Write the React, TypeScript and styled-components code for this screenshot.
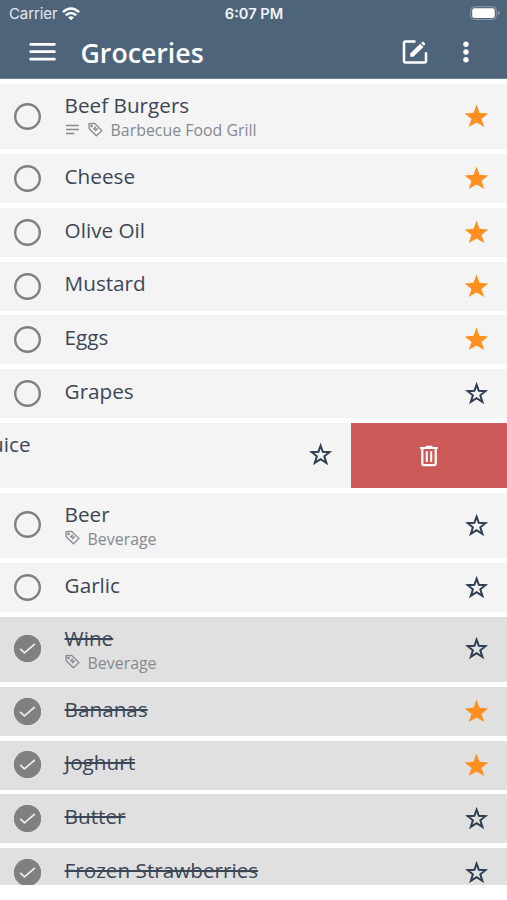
import React from "react";
import styled, { createGlobalStyle } from "styled-components";

const Global = createGlobalStyle`
  * { box-sizing: border-box; }
  body { margin: 0; background: #fff; font-family: "Open Sans", sans-serif; }
  svg { display: block; flex: none; }
`;

const Screen = styled.main`
  width: 507px;
  height: 900px;
  overflow: hidden;
  display: flex;
  flex-direction: column;
  background: #fff;
`;

const Header = styled.header`
  height: 79.4px;
  flex: none;
  background: #4d647b;
  border-bottom: 1px solid #64829a;
  color: #fff;
`;

const StatusBar = styled.div`
  height: 27px;
  padding: 0 7px 0 9px;
  display: grid;
  grid-template-columns: 1fr auto 1fr;
  align-items: center;
  font-family: Inter, sans-serif;
  font-size: 15px;
`;

const Carrier = styled.div`
  display: flex;
  align-items: center;
  gap: 5px;
  letter-spacing: -0.1px;
  color: #e6ebf0;
`;

const Clock = styled.time`
  font-weight: 600;
  font-size: 14.6px;
  margin-right: 1px;
  color: #f1f4f7;
`;

const Battery = styled.div`
  display: flex;
  justify-content: flex-end;
`;

const Toolbar = styled.div`
  height: 50.6px;
  padding: 0 38px 0 28px;
  display: flex;
  align-items: center;
`;

const Title = styled.h1`
  margin: 0 auto 0 24.5px;
  padding-top: 1px;
  font-size: 26.7px;
  line-height: 36px;
  font-weight: 600;
`;

const IconButton = styled.button<{ $gap?: number }>`
  margin: 0 0 0 ${(p) => p.$gap ?? 0}px;
  padding: 0;
  border: 0;
  background: none;
  color: inherit;
`;

const List = styled.ul`
  list-style: none;
  margin: 0;
  padding: 4.8px 0 0;
  height: 805.8px;
  flex: none;
  overflow: hidden;
  display: flex;
  flex-direction: column;
  gap: 4.8px;
`;

const Row = styled.li<{ $tall?: boolean; $done?: boolean }>`
  flex: none;
  height: ${(p) => (p.$tall ? 65.3 : 48.95)}px;
  padding: 0 18.5px 0 14px;
  display: flex;
  align-items: center;
  background: ${(p) => (p.$done ? "#e0e0e0" : "#f4f4f4")};
`;

const SwipedRow = styled(Row)`
  padding: 0;
  justify-content: flex-end;
`;

const SwipedContent = styled.div`
  width: 507px;
  height: 100%;
  flex: none;
  padding: 0 18.5px 0 14px;
  display: flex;
  align-items: center;
`;

const DeleteAction = styled.button`
  width: 156px;
  height: 100%;
  flex: none;
  display: flex;
  align-items: center;
  justify-content: center;
  padding: 0;
  border: 0;
  background: #cb5a58;
`;

const Check = styled.span<{ $done?: boolean; $tall?: boolean }>`
  width: 27px;
  height: 27px;
  margin-bottom: ${(p) => (p.$tall ? 1.6 : 0.4)}px;
  flex: none;
  border-radius: 50%;
  box-shadow: inset 0 0 0 2.4px #808080;
  background: ${(p) => (p.$done ? "#808080" : "transparent")};
  display: flex;
  align-items: center;
  justify-content: center;
`;

const Body = styled.div<{ $tall?: boolean }>`
  flex: 1;
  align-self: flex-start;
  margin-left: 23.6px;
  padding-top: ${(p) => (p.$tall ? 6.9 : 7.6)}px;
  white-space: nowrap;
`;

const Name = styled.div<{ $done?: boolean }>`
  font-size: 20.7px;
  line-height: 28px;
  color: #3b4756;
  text-decoration: ${(p) => (p.$done ? "line-through 2px" : "none")};
`;

const Meta = styled.div`
  display: flex;
  align-items: center;
  gap: 8px;
  font-size: 15.9px;
  line-height: 22px;
  color: #858990;

  svg {
    margin-bottom: 2px;
  }
`;

const StarBox = styled.span<{ $tall?: boolean }>`
  flex: none;
  margin-bottom: ${(p) => (p.$tall ? 2.4 : 1.2)}px;
`;

const Star = ({ filled, tall }: { filled?: boolean; tall?: boolean }) => (
  <StarBox $tall={tall}>
    <svg width="24" height="24" viewBox="0 0 24 24">
      {filled ? (
        <path d="M11.5 .6 14.5 8.8 23.2 9.6 16.5 15 19.3 23 11.5 18.4 3.7 23 6.5 15 -.2 9.6 8.5 8.8Z" fill="#ff9020" />
      ) : (
        <path
          d="M11.6 3.7 13.8 9.8 20.5 10.2 15.3 14.3 17.4 20.8 11.6 17.1 5.8 20.8 7.9 14.3 2.7 10.2 9.4 9.8Z"
          fill="none"
          stroke="#2f3e50"
          strokeWidth="2"
        />
      )}
    </svg>
  </StarBox>
);

const TagIcon = () => (
  <svg width="15" height="15" viewBox="0 0 15 15" fill="none" stroke="#858990" strokeWidth="1.3" strokeLinejoin="round">
    <path d="M1 1.7 1.2 6.8 8.4 13.8 13.9 8.6 6.7 1.4Z" />
    <circle cx="3.6" cy="4" r=".7" />
    <path d="m5.3 7.3 2.5-2.5M7.1 9.1l2.7-2.6M5.7 6.8l3.6.4" />
  </svg>
);

const NotesIcon = () => (
  <svg width="15" height="13" viewBox="0 0 15 13" stroke="#858990" strokeWidth="1.5">
    <path d="M1 2.5h12.8M1 6.5h12.8M1 10.5h8.3" />
  </svg>
);

const TickIcon = () => (
  <svg width="17" height="13" viewBox="0 0 17 13" fill="none" stroke="#ececec" strokeWidth="1.7">
    <path d="m1.2 6.8 4.2 4L15.8 2" />
  </svg>
);

const MenuIcon = () => (
  <svg width="28" height="20" viewBox="0 0 28 20" stroke="#fff" strokeWidth="2.8" strokeLinecap="round">
    <path d="M2.7 2.3h23.7M2.7 9.7h23.7M2.7 17.2h23.7" />
  </svg>
);

const EditIcon = () => (
  <svg width="26" height="26" viewBox="0 0 26 26" fill="none" stroke="#fff" strokeWidth="2.5" strokeLinejoin="round">
    <path d="M13.5 2.5H3.5q-1.5 0-1.5 1.5v18q0 1.5 1.5 1.5h19q1.5 0 1.5-1.5V13.2" />
    <path d="M8.2 14.6 18.2 4.8 21.4 8 11.4 17.8H8.2Z" fill="#fff" stroke="none" />
    <path d="m19.1 3.9 1-1q.7-.6 1.4 0l1.4 1.4q.7.7 0 1.4l-1 1Z" fill="#fff" stroke="none" />
  </svg>
);

const MoreIcon = () => (
  <svg width="6" height="24" viewBox="0 0 6 24" fill="#fff">
    <circle cx="3" cy="4.2" r="2.7" />
    <circle cx="3" cy="12" r="2.7" />
    <circle cx="3" cy="19.8" r="2.7" />
  </svg>
);

const TrashIcon = () => (
  <svg width="20" height="22" viewBox="0 0 20 22" fill="none" stroke="#fff" strokeWidth="2.2">
    <path d="M1.2 3h17.6M6.6 1.9h6.8" />
    <path d="M3.3 3v15.6q0 1.5 1.5 1.5h10.4q1.5 0 1.5-1.5V3" />
    <path d="M7.8 6.2v10.8M12.2 6.2v10.8" strokeWidth="2" />
  </svg>
);

const WifiIcon = () => (
  <svg width="18" height="14" viewBox="0 0 18 14" fill="none" stroke="#fff" strokeWidth="2.5">
    <path d="M.9 5.1Q9-2.2 17.1 5.1M3.8 8.2q5.2-4.4 10.4 0" />
    <path d="M9 13.3 6.1 10.4q2.9-2.3 5.8 0Z" fill="#fff" stroke="none" />
  </svg>
);

const BatteryIcon = () => (
  <svg width="30" height="15" viewBox="0 0 30 15">
    <rect x=".6" y=".7" width="25.8" height="12.8" rx="3.8" fill="none" stroke="#8d9dac" />
    <rect x="2.2" y="2.3" width="22.6" height="9.6" rx="2.2" fill="#fff" />
    <path d="M28 4.8q1.8 1 1.8 2.3T28 9.4Z" fill="#8d9dac" />
  </svg>
);

type Item = { name: string; starred?: boolean; done?: boolean; tags?: string; notes?: boolean; swiped?: boolean };

const items: Item[] = [
  { name: "Beef Burgers", starred: true, tags: "Barbecue Food Grill", notes: true },
  { name: "Cheese", starred: true },
  { name: "Olive Oil", starred: true },
  { name: "Mustard", starred: true },
  { name: "Eggs", starred: true },
  { name: "Grapes" },
  { name: "Orange Juice", swiped: true },
  { name: "Beer", tags: "Beverage" },
  { name: "Garlic" },
  { name: "Wine", done: true, tags: "Beverage" },
  { name: "Bananas", done: true, starred: true },
  { name: "Joghurt", done: true, starred: true },
  { name: "Butter", done: true },
  { name: "Frozen Strawberries", done: true },
];

const ItemContent = ({ item }: { item: Item }) => {
  const tall = !!item.tags || !!item.swiped;
  return (
    <>
      <Check $done={item.done} $tall={tall}>{item.done && <TickIcon />}</Check>
      <Body $tall={tall}>
        <Name $done={item.done}>{item.name}</Name>
        {item.tags && (
          <Meta>
            {item.notes && <NotesIcon />}
            <TagIcon />
            <span>{item.tags}</span>
          </Meta>
        )}
      </Body>
      <Star filled={item.starred} tall={tall} />
    </>
  );
};

export default function App() {
  return (
    <>
      <Global />
      <Screen>
        <Header>
          <StatusBar>
            <Carrier>Carrier <WifiIcon /></Carrier>
            <Clock>6:07 PM</Clock>
            <Battery><BatteryIcon /></Battery>
          </StatusBar>
          <Toolbar>
            <IconButton aria-label="Menu"><MenuIcon /></IconButton>
            <Title>Groceries</Title>
            <IconButton aria-label="Edit"><EditIcon /></IconButton>
            <IconButton aria-label="More" $gap={35}><MoreIcon /></IconButton>
          </Toolbar>
        </Header>
        <List>
          {items.map((item) =>
            item.swiped ? (
              <SwipedRow key={item.name} $tall>
                <SwipedContent><ItemContent item={item} /></SwipedContent>
                <DeleteAction aria-label="Delete"><TrashIcon /></DeleteAction>
              </SwipedRow>
            ) : (
              <Row key={item.name} $tall={!!item.tags} $done={item.done}>
                <ItemContent item={item} />
              </Row>
            ),
          )}
        </List>
      </Screen>
    </>
  );
}
